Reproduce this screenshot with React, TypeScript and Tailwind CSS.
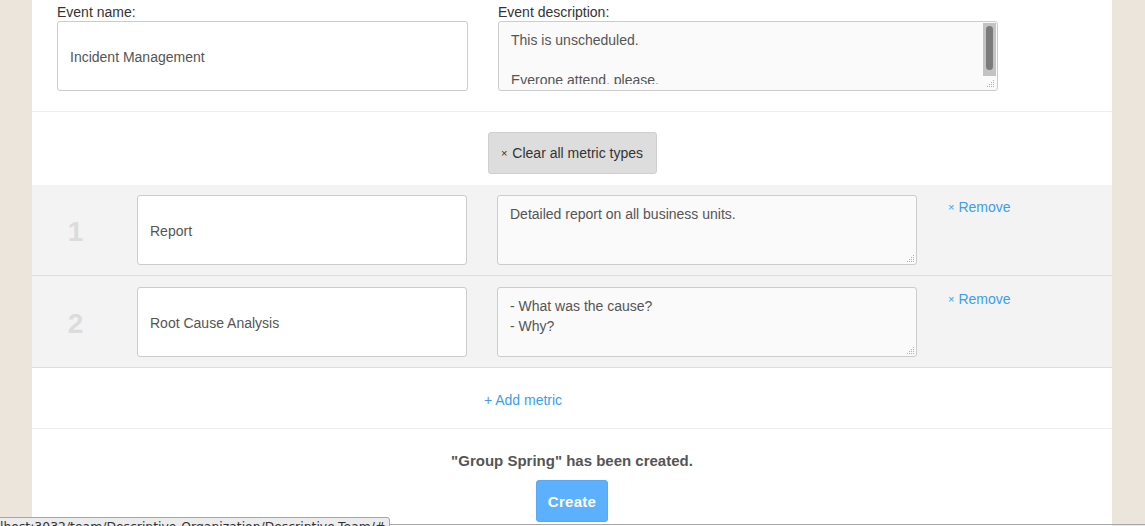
import React from "react";

const font = { fontFamily: '"Liberation Sans", Arial, sans-serif' };

function Grip() {
  return (
    <svg className="pointer-events-none absolute bottom-[2px] right-[2px]" width="9" height="9" viewBox="0 0 9 9">
      <g fill="#b0b0b0">
        <rect x="7" y="1" width="1" height="1" />
        <rect x="5" y="3" width="1" height="1" />
        <rect x="7" y="3" width="1" height="1" />
        <rect x="3" y="5" width="1" height="1" />
        <rect x="5" y="5" width="1" height="1" />
        <rect x="7" y="5" width="1" height="1" />
        <rect x="1" y="7" width="1" height="1" />
        <rect x="3" y="7" width="1" height="1" />
        <rect x="5" y="7" width="1" height="1" />
        <rect x="7" y="7" width="1" height="1" />
      </g>
    </svg>
  );
}

function MetricRow({ n, name, desc, first }: { n: number; name: string; desc: string; first?: boolean }) {
  return (
    <div
      className={
        first
          ? "flex h-[91px] items-start border-b border-[#dddddd] bg-[#f3f3f3] pt-[10px]"
          : "flex h-[92px] items-start border-b border-[#dddddd] bg-[#f3f3f3] pt-[11px]"
      }
    >
      <div className="flex h-[70px] w-[87px] items-center justify-center pt-[3px] text-[28px] font-bold text-[#dcdcdc]">
        {n}
      </div>
      <input
        readOnly
        defaultValue={name}
        className="ml-[18px] h-[70px] w-[330px] rounded-[3px] border border-[#cccccc] bg-white px-[12px] pt-[2px] text-[14px] text-[#555555] outline-none"
        style={font}
      />
      <div className="relative ml-[30px]">
        <textarea
          readOnly
          defaultValue={desc}
          className="block h-[70px] w-[420px] resize-none rounded-[3px] border border-[#cccccc] bg-[#fafafa] px-[12px] pt-[8px] text-[14px] leading-[20px] text-[#555555] outline-none"
          style={font}
        />
        <Grip />
      </div>
      <a className="ml-[31px] mt-[2px] flex items-center gap-[4px] text-[14px] text-[#3a9ef2]">
        <span className="text-[11px]">×</span>
        <span>Remove</span>
      </a>
    </div>
  );
}

export default function App() {
  return (
    <div className="relative h-[526px] overflow-hidden bg-[#ece5dc]" style={font}>
      <div className="ml-[32px] h-[526px] w-[1080px] bg-white">
        {/* top section */}
        <div className="flex h-[112px] gap-[30px] border-b border-[#eeeeee] px-[25px] pt-[4px]">
          <div className="flex flex-col">
            <label className="h-[17px] text-[14px] leading-[16px] text-[#333333]">Event name:</label>
            <input
              readOnly
              defaultValue="Incident Management"
              className="h-[70px] w-[411px] rounded-[3px] border border-[#cccccc] bg-white px-[12px] pt-[2px] text-[14px] text-[#555555] outline-none"
              style={font}
            />
          </div>
          <div className="flex flex-col">
            <label className="h-[17px] text-[14px] leading-[16px] text-[#333333]">Event description:</label>
            <div className="relative flex h-[70px] w-[500px] rounded-[3px] border border-[#cccccc] bg-[#fafafa]">
              <div className="h-[62px] flex-1 overflow-hidden px-[12px] pt-[8px] text-[14px] leading-[20px] text-[#555555]">
                <div>This is unscheduled.</div>
                <div>&nbsp;</div>
                <div>Everone attend, please.</div>
              </div>
              <div className="mr-[1px] mt-[1px] flex h-[53px] w-[13px] justify-center bg-[#c3c3c3] pt-[3px]">
                <div className="h-[44px] w-[7px] rounded-[4px] bg-[#7b7b7b]" />
              </div>
              <Grip />
            </div>
          </div>
        </div>

        {/* clear button */}
        <div className="flex h-[73px] justify-center pt-[20px]">
          <button className="flex h-[42px] w-[169px] items-center justify-center gap-[5px] rounded-[3px] border border-[#cfcfcf] bg-[#dddddd] pt-[1px] text-[14px] text-[#333333]">
            <span className="text-[11px]">×</span>
            <span>Clear all metric types</span>
          </button>
        </div>

        <MetricRow first n={1} name="Report" desc="Detailed report on all business units." />
        <MetricRow n={2} name="Root Cause Analysis" desc={"- What was the cause?\n- Why?"} />

        {/* add metric */}
        <div className="flex h-[61px] items-center justify-center border-b border-[#eeeeee] pr-[98px] pt-[4px]">
          <a className="text-[14px] text-[#3a9ef2]">+ Add metric</a>
        </div>

        {/* footer */}
        <div className="flex flex-col items-center pt-[23px]">
          <p className="text-[15px] font-bold leading-[18px] text-[#555555]">"Group Spring" has been created.</p>
          <button className="mt-[10px] h-[42px] w-[72px] rounded-[3px] border border-[#55a9f6] bg-[#5cb0fd] pt-[2px] text-[15px] font-bold tracking-[0.3px] text-white">
            Create
          </button>
        </div>
      </div>

      {/* browser status bubble */}
      <div className="absolute bottom-[1px] left-0 right-0 h-[1px] bg-[#a8a8a8]" />
      <div
        className="absolute left-[-2px] top-[517px] h-[20px] w-[392px] overflow-hidden whitespace-nowrap rounded-tr-[3px] border border-[#a6a6a6] bg-[#ececec] px-[1px] pt-[1px] leading-[16px] text-[#333333]"
        style={{ fontFamily: '"DejaVu Sans", sans-serif', fontSize: "12.4px" }}
      >
        lhost:3032/team/Descriptive-Organization/Descriptive-Team/#
      </div>
    </div>
  );
}
